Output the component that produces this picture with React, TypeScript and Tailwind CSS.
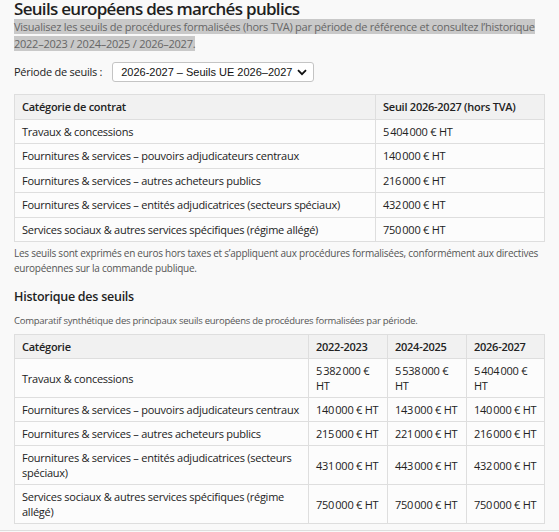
import React from 'react';

const NS = '\u202f';

interface Row {
  label: string;
  values: string[];
}

const currentRows: Row[] = [
  { label: 'Travaux & concessions', values: [`5${NS}404${NS}000 € HT`] },
  { label: 'Fournitures & services – pouvoirs adjudicateurs centraux', values: [`140${NS}000 € HT`] },
  { label: 'Fournitures & services – autres acheteurs publics', values: [`216${NS}000 € HT`] },
  { label: 'Fournitures & services – entités adjudicatrices (secteurs spéciaux)', values: [`432${NS}000 € HT`] },
  { label: 'Services sociaux & autres services spécifiques (régime allégé)', values: [`750${NS}000 € HT`] },
];

const historyRows: Row[] = [
  { label: 'Travaux & concessions', values: [`5${NS}382${NS}000 € HT`, `5${NS}538${NS}000 € HT`, `5${NS}404${NS}000 € HT`] },
  { label: 'Fournitures & services – pouvoirs adjudicateurs centraux', values: [`140${NS}000 € HT`, `143${NS}000 € HT`, `140${NS}000 € HT`] },
  { label: 'Fournitures & services – autres acheteurs publics', values: [`215${NS}000 € HT`, `221${NS}000 € HT`, `216${NS}000 € HT`] },
  { label: 'Fournitures & services – entités adjudicatrices (secteurs spéciaux)', values: [`431${NS}000 € HT`, `443${NS}000 € HT`, `432${NS}000 € HT`] },
  { label: 'Services sociaux & autres services spécifiques (régime allégé)', values: [`750${NS}000 € HT`, `750${NS}000 € HT`, `750${NS}000 € HT`] },
];

const cell = 'border border-[#dedede] px-[7px] py-[4px] align-middle';
const headCell = 'border border-[#dedede] px-[7px] py-[4px] text-left font-semibold bg-[#f1f1f1]';

const App: React.FC = () => {
  return (
    <div
      className="min-h-[532px] bg-[#f9f9f9] text-[#222] overflow-hidden tracking-[-0.25px]"
      style={{ fontFamily: '"Open Sans", "Noto Sans", sans-serif' }}
    >
      <div className="px-[14px]">
        {/* Title */}
        <h1 className="text-[17px] leading-[18px] font-semibold tracking-[-0.7px] text-[#1f1f1f]">
          Seuils européens des marchés publics
        </h1>
        <p className="text-[11px] leading-[17px] text-[#666]">
          <span className="bg-[#c9c9c9]">
            Visualisez les seuils de procédures formalisées (hors TVA) par période de référence et consultez l’historique
            2022–2023 / 2024–2025 / 2026–2027.
          </span>
        </p>

        {/* Period selector */}
        <div className="mt-[10px] flex items-center gap-[10px]">
          <label className="text-[11px] text-[#222]">Période de seuils :</label>
          <div
            className="flex h-[20px] items-center gap-[5px] rounded-[3px] border border-[#c4c4c4] bg-white pl-[8px] pr-[6px] text-[11px] tracking-normal text-[#111]"
            style={{ fontFamily: '"Liberation Sans", Arial, sans-serif' }}
          >
            <span>2026-2027 – Seuils UE 2026–2027</span>
            <svg width="10" height="7" viewBox="0 0 10 7" fill="none">
              <path d="M1 1.2 L5 5.2 L9 1.2" stroke="#111" strokeWidth="1.8" />
            </svg>
          </div>
        </div>

        {/* Current period table */}
        <table className="mt-[12px] w-full table-fixed border-collapse bg-[#fcfcfc] text-[11px] leading-[15.5px]">
          <colgroup>
            <col className="w-[361px]" />
            <col />
          </colgroup>
          <thead>
            <tr>
              <th className={headCell}>Catégorie de contrat</th>
              <th className={headCell}>Seuil 2026-2027 (hors TVA)</th>
            </tr>
          </thead>
          <tbody>
            {currentRows.map((r) => (
              <tr key={r.label}>
                <td className={cell}>{r.label}</td>
                <td className={cell}>{r.values[0]}</td>
              </tr>
            ))}
          </tbody>
        </table>

        <p className="mt-[4px] text-[10px] leading-[15px] text-[#555]">
          Les seuils sont exprimés en euros hors taxes et s’appliquent aux procédures formalisées, conformément aux directives
          européennes sur la commande publique.
        </p>

        {/* History */}
        <h2 className="mt-[12px] text-[12.5px] leading-[18px] font-semibold text-[#1f1f1f]">Historique des seuils</h2>
        <p className="mt-[8px] text-[9.5px] leading-[14px] text-[#555]">
          Comparatif synthétique des principaux seuils européens de procédures formalisées par période.
        </p>

        <table className="mt-[6px] w-full table-fixed border-collapse bg-[#fcfcfc] text-[11px] leading-[15px]">
          <colgroup>
            <col className="w-[294px]" />
            <col className="w-[79px]" />
            <col className="w-[79px]" />
            <col />
          </colgroup>
          <thead>
            <tr>
              <th className={headCell}>Catégorie</th>
              <th className={headCell}>2022-2023</th>
              <th className={headCell}>2024-2025</th>
              <th className={headCell}>2026-2027</th>
            </tr>
          </thead>
          <tbody>
            {historyRows.map((r) => (
              <tr key={r.label}>
                <td className={cell}>{r.label}</td>
                {r.values.map((v, i) => (
                  <td key={i} className={cell}>
                    {v}
                  </td>
                ))}
              </tr>
            ))}
          </tbody>
        </table>
      </div>
      <div className="mt-[6px] border-t border-[#dedede]" />
    </div>
  );
};

export default App;
